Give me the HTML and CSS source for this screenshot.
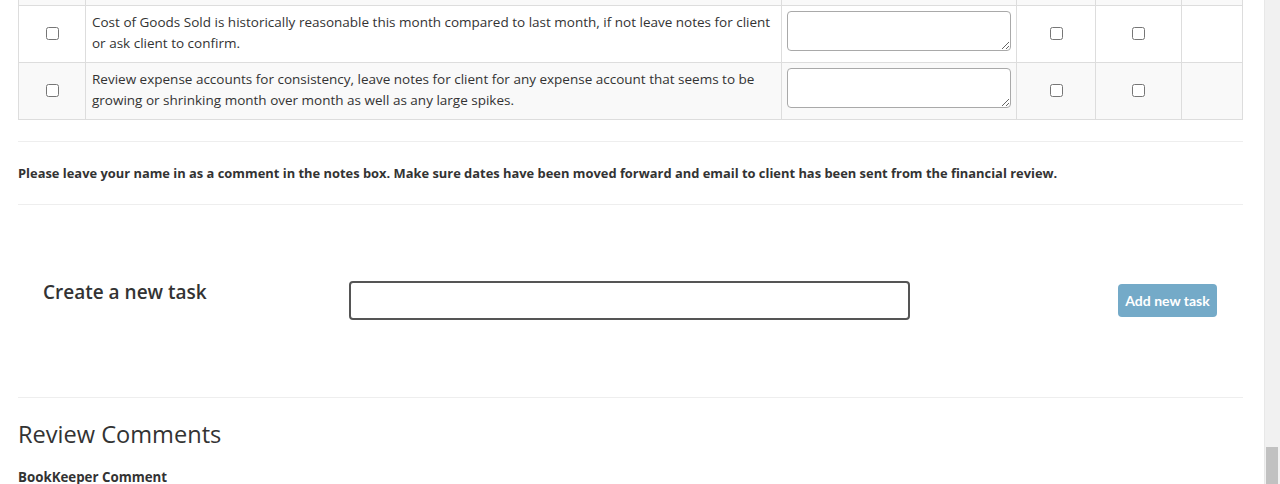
FILE: index.html
```html
<!DOCTYPE html>
<html lang="en">
<head>
  <meta charset="UTF-8">
  <title>Monthly Review - Checklist</title>
  <link rel="stylesheet" href="styles.css">
</head>
<body>
  <div class="page">
    <table class="checklist">
      <colgroup>
        <col style="width: 67px">
        <col style="width: 696px">
        <col style="width: 235px">
        <col style="width: 79px">
        <col style="width: 86px">
        <col style="width: 61px">
      </colgroup>
      <tr class="row-cut">
        <td></td><td></td><td></td><td></td><td></td><td></td>
      </tr>
      <tr class="item">
        <td class="check"><input type="checkbox"></td>
        <td class="task-text">Cost of Goods Sold is historically reasonable this month compared to last month, if not leave notes for client or ask client to confirm.</td>
        <td class="notes"><textarea></textarea></td>
        <td class="check"><input type="checkbox"></td>
        <td class="check"><input type="checkbox"></td>
        <td></td>
      </tr>
      <tr class="item">
        <td class="check"><input type="checkbox"></td>
        <td class="task-text">Review expense accounts for consistency, leave notes for client for any expense account that seems to be growing or shrinking month over month as well as any large spikes.</td>
        <td class="notes"><textarea></textarea></td>
        <td class="check"><input type="checkbox"></td>
        <td class="check"><input type="checkbox"></td>
        <td></td>
      </tr>
    </table>

    <p class="note">Please leave your name in as a comment in the notes box. Make sure dates have been moved forward and email to client has been sent from the financial review.</p>

    <form class="new-task" id="new-task-form">
      <h4>Create a new task</h4>
      <input type="text" id="new-task-name">
      <button type="submit" disabled>Add new task</button>
    </form>

    <h3>Review Comments</h3>
    <h5>BookKeeper Comment</h5>
  </div>

  <div class="scrollbar">
    <div class="thumb"></div>
  </div>
</body>
</html>
```

FILE: styles.css
```css
html, body {
  height: 484px;
  overflow: hidden;
}

body {
  margin: 0;
  display: flex;
  font-family: 'Open Sans', 'Noto Sans', sans-serif;
  font-size: 12.9px;
  color: #333;
  background: #fff;
}

.page {
  flex: 1;
  padding: 0 21px 0 18px;
}

.checklist {
  width: 1224px;
  table-layout: fixed;
  border-collapse: collapse;
  border: 1px solid #ddd;
  border-top: none;
}

.checklist td {
  border: 1px solid #ddd;
  padding: 5px 6px;
  vertical-align: middle;
  line-height: 21px;
}

.checklist tr:nth-child(odd) {
  background-color: #f9f9f9;
}

.checklist .row-cut td {
  height: 5px;
  padding: 0;
  border-top: none;
}

.checklist .item td {
  height: 46px;
}

.checklist .item td.task-text {
  padding-top: 3px;
  font-size: 13.5px;
}

.check {
  text-align: center;
}

.check input {
  margin: 0 0 3px;
  width: 13px;
  height: 13px;
  vertical-align: middle;
}

.checklist td.notes {
  padding: 5px;
  vertical-align: top;
}

.notes textarea {
  display: block;
  width: 100%;
  height: 40px;
  box-sizing: border-box;
  border: 1px solid #a9a9a9;
  border-radius: 4px;
  background: #fff;
}

.note {
  margin: 21px 0 0;
  padding: 21px 0;
  border-top: 1px solid #eee;
  border-bottom: 1px solid #eee;
  font-weight: 700;
  line-height: 20px;
}

.new-task {
  display: flex;
  align-items: flex-start;
  height: 116px;
  padding: 76px 26px 0 25px;
  border-bottom: 1px solid #eee;
}

.new-task h4 {
  width: 306px;
  margin: 0;
  font-size: 19px;
  font-weight: 600;
  line-height: 22px;
}

.new-task input {
  width: 561px;
  height: 39px;
  box-sizing: border-box;
  border: 2px solid #555;
  border-radius: 4px;
}

.new-task button {
  margin: 3px 0 0 auto;
  width: 99px;
  height: 33px;
  border: none;
  border-radius: 4px;
  background-color: #74aac8;
  color: #fff;
  font-family: Lato, sans-serif;
  font-weight: 700;
  font-size: 14px;
}

h3 {
  margin: 23px 0 20px;
  font-size: 23.6px;
  font-weight: 400;
  line-height: 26px;
}

h5 {
  margin: 0;
  font-size: 13.3px;
  font-weight: 700;
  line-height: 20px;
}

.scrollbar {
  width: 17px;
  display: flex;
  flex-direction: column;
  background: #f1f1f1;
  border-left: 1px solid #e8e8e8;
  box-sizing: border-box;
}

.thumb {
  margin: auto 2px 0 1px;
  height: 37px;
  background: #c1c1c1;
}
```
